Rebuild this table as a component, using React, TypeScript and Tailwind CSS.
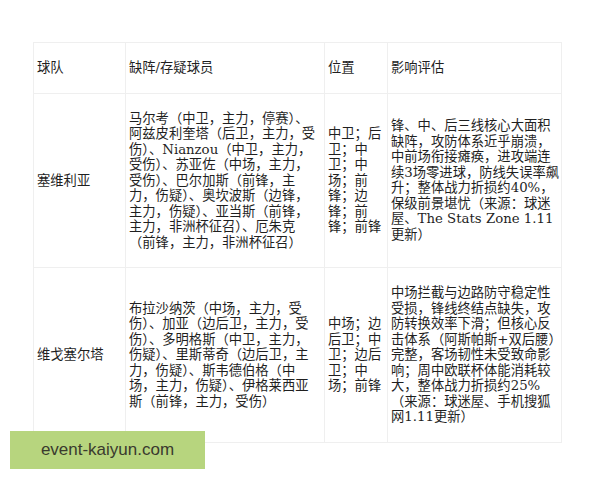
const headers = ["球队", "缺阵/存疑球员", "位置", "影响评估"];

const rows = [
  {
    team: "塞维利亚",
    players: [
      "马尔考（中卫，主力，停赛）、",
      "阿兹皮利奎塔（后卫，主力，受",
      "伤）、Nianzou（中卫，主力，",
      "受伤）、苏亚佐（中场，主力，",
      "受伤）、巴尔加斯（前锋，主",
      "力，伤疑）、奥坎波斯（边锋，",
      "主力，伤疑）、亚当斯（前锋，",
      "主力，非洲杯征召）、厄朱克",
      "（前锋，主力，非洲杯征召）",
    ],
    positions: ["中卫；后", "卫；中", "卫；中", "场；前", "锋；边", "锋；前", "锋；前锋"],
    impact: [
      "锋、中、后三线核心大面积",
      "缺阵，攻防体系近乎崩溃，",
      "中前场衔接瘫痪，进攻端连",
      "续3场零进球，防线失误率飙",
      "升；整体战力折损约40%，",
      "保级前景堪忧（来源：球迷",
      "屋、The Stats Zone 1.11",
      "更新）",
    ],
  },
  {
    team: "维戈塞尔塔",
    players: [
      "布拉沙纳茨（中场，主力，受",
      "伤）、加亚（边后卫，主力，受",
      "伤）、多明格斯（中卫，主力，",
      "伤疑）、里斯蒂奇（边后卫，主",
      "力，伤疑）、斯韦德伯格（中",
      "场，主力，伤疑）、伊格莱西亚",
      "斯（前锋，主力，受伤）",
    ],
    positions: ["中场；边", "后卫；中", "卫；边后", "卫；中", "场；前锋"],
    impact: [
      "中场拦截与边路防守稳定性",
      "受损，锋线终结点缺失，攻",
      "防转换效率下滑；但核心反",
      "击体系（阿斯帕斯+双后腰）",
      "完整，客场韧性未受致命影",
      "响；周中欧联杯体能消耗较",
      "大，整体战力折损约25%",
      "（来源：球迷屋、手机搜狐",
      "网1.11更新）",
    ],
  },
];

function Lines({ lines }: { lines: string[] }) {
  return (
    <div className="whitespace-nowrap">
      {lines.map((line, i) => (
        <div key={i}>{line}</div>
      ))}
    </div>
  );
}

const cell = "flex items-center border-r border-b border-[#efefef] pl-[3px] py-[17px]";

export default function App() {
  return (
    <div className="relative w-[600px] h-[480px] overflow-hidden bg-white">
      <div
        className="ml-[33px] mt-[42px] w-[529px] grid grid-cols-[92px_199px_63px_174px] border-l border-t border-[#efefef] text-[13.3px] leading-[15.5px] text-[#1f1f1f]"
        style={{ fontFamily: '"DejaVu Serif", "Noto Sans CJK SC", serif' }}
      >
        {headers.map((h) => (
          <div key={h} className={cell}>
            {h}
          </div>
        ))}

        {rows.map((row) => (
          <div key={row.team} className="contents">
            <div className={cell}>{row.team}</div>
            <div className={cell}>
              <Lines lines={row.players} />
            </div>
            <div className={cell}>
              <Lines lines={row.positions} />
            </div>
            <div className={cell}>
              <Lines lines={row.impact} />
            </div>
          </div>
        ))}
      </div>

      <div className="absolute left-[10px] top-[431px] w-[195px] h-[38px] bg-[#b3d377]/95 flex items-center justify-center">
        <span
          className="text-[17px] text-[#3a3a2e]"
          style={{ fontFamily: '"Liberation Sans", Arial, sans-serif' }}
        >
          event-kaiyun.com
        </span>
      </div>
    </div>
  );
}
